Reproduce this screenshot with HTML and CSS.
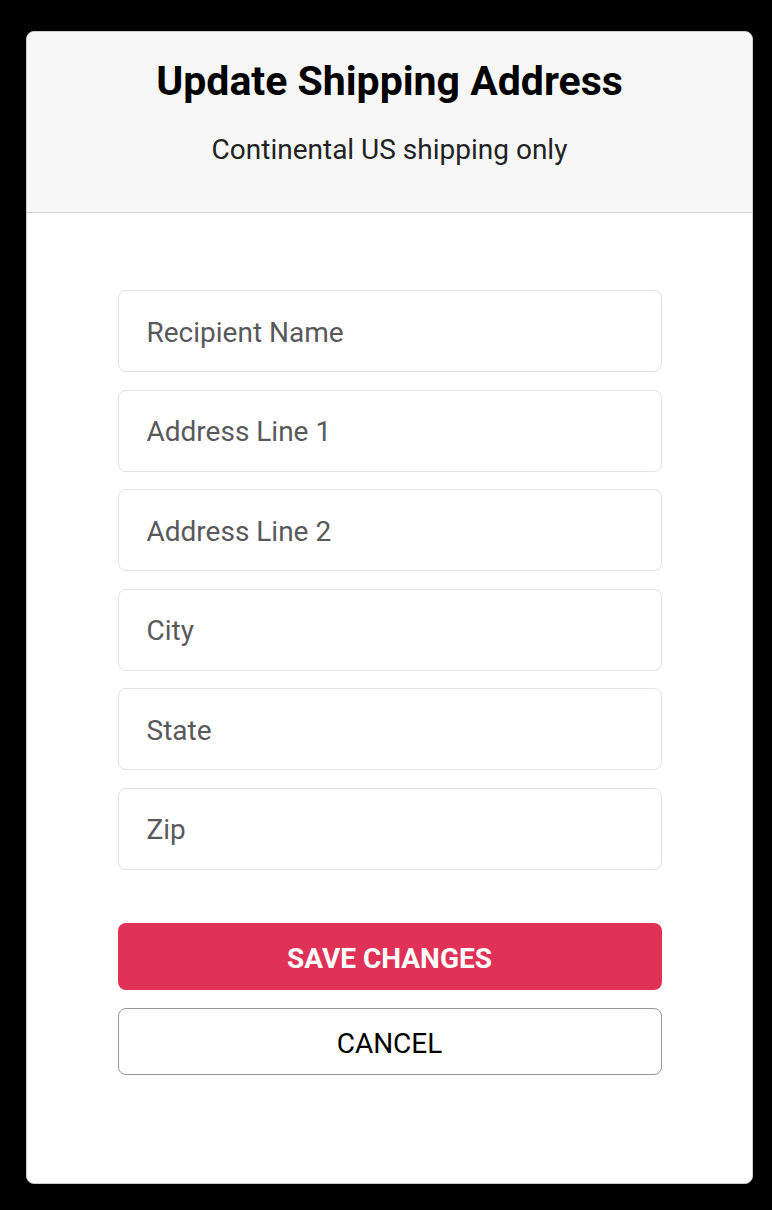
FILE: index.html
```html
<!DOCTYPE html>
<html lang="en">
<head>
  <meta charset="UTF-8" />
  <title>Update Shipping Address</title>
  <meta name="viewport" content="width=device-width, initial-scale=1.0" />
  <link rel="stylesheet" href="styles.css">
</head>

<body>

<div class="modal">
  <header class="modal-header">
    <h1>Update Shipping Address</h1>
    <p class="subtitle">Continental US shipping only</p>
  </header>

  <form class="address-form" onsubmit="return false">
    <input type="text" placeholder="Recipient Name" />
    <input type="text" placeholder="Address Line 1" />
    <input type="text" placeholder="Address Line 2" />
    <input type="text" placeholder="City" />
    <input type="text" placeholder="State" />
    <input type="text" placeholder="Zip" />

    <div class="actions">
      <button type="submit" class="btn-save">Save Changes</button>
      <button type="button" class="btn-cancel">Cancel</button>
    </div>
  </form>
</div>

</body>
</html>
```

FILE: styles.css
```css
:root {
  --accent: #e03257;
  --header-bg: #f7f7f7;
  --field-border: #e2e2e2;
  --placeholder: #59595c;
}

* {
  box-sizing: border-box;
  margin: 0;
  padding: 0;
}

html, body {
  height: 100%;
  background: #000;
  font-family: Roboto, "Noto Sans", Arial, sans-serif;
}

body {
  padding: 31px 19px 26px 26px;
}

.modal {
  height: 1153px;
  background: #fff;
  border: 1px solid #ccc;
  border-radius: 8px;
  overflow: hidden;
}

.modal-header {
  background: var(--header-bg);
  border-bottom: 1px solid #cfcfcf;
  padding: 27px 20px 46px;
  text-align: center;
}

.modal-header h1 {
  font-size: 41px;
  line-height: 44px;
  font-weight: 700;
  color: #000;
}

.subtitle {
  margin-top: 31px;
  font-size: 28px;
  line-height: 32px;
  color: #222;
}

.address-form {
  width: 544px;
  margin: 77px auto 0;
  display: flex;
  flex-direction: column;
  gap: 17.5px;
}

.address-form input {
  height: 82px;
  border: 1px solid var(--field-border);
  border-radius: 8px;
  padding: 2px 28px 0;
  font-family: inherit;
  font-size: 28px;
  color: #222;
  outline: none;
}

.address-form input::placeholder {
  color: var(--placeholder);
}

.actions {
  margin-top: 36px;
  display: flex;
  flex-direction: column;
  gap: 18px;
}

.actions button {
  height: 67px;
  padding-top: 4px;
  border-radius: 8px;
  font-family: inherit;
  font-size: 28px;
  text-transform: uppercase;
  cursor: pointer;
}

.btn-save {
  background: var(--accent);
  color: #fff;
  border: none;
  font-weight: 700;
}

.btn-cancel {
  background: #fff;
  color: #000;
  border: 1px solid #999;
}
```
